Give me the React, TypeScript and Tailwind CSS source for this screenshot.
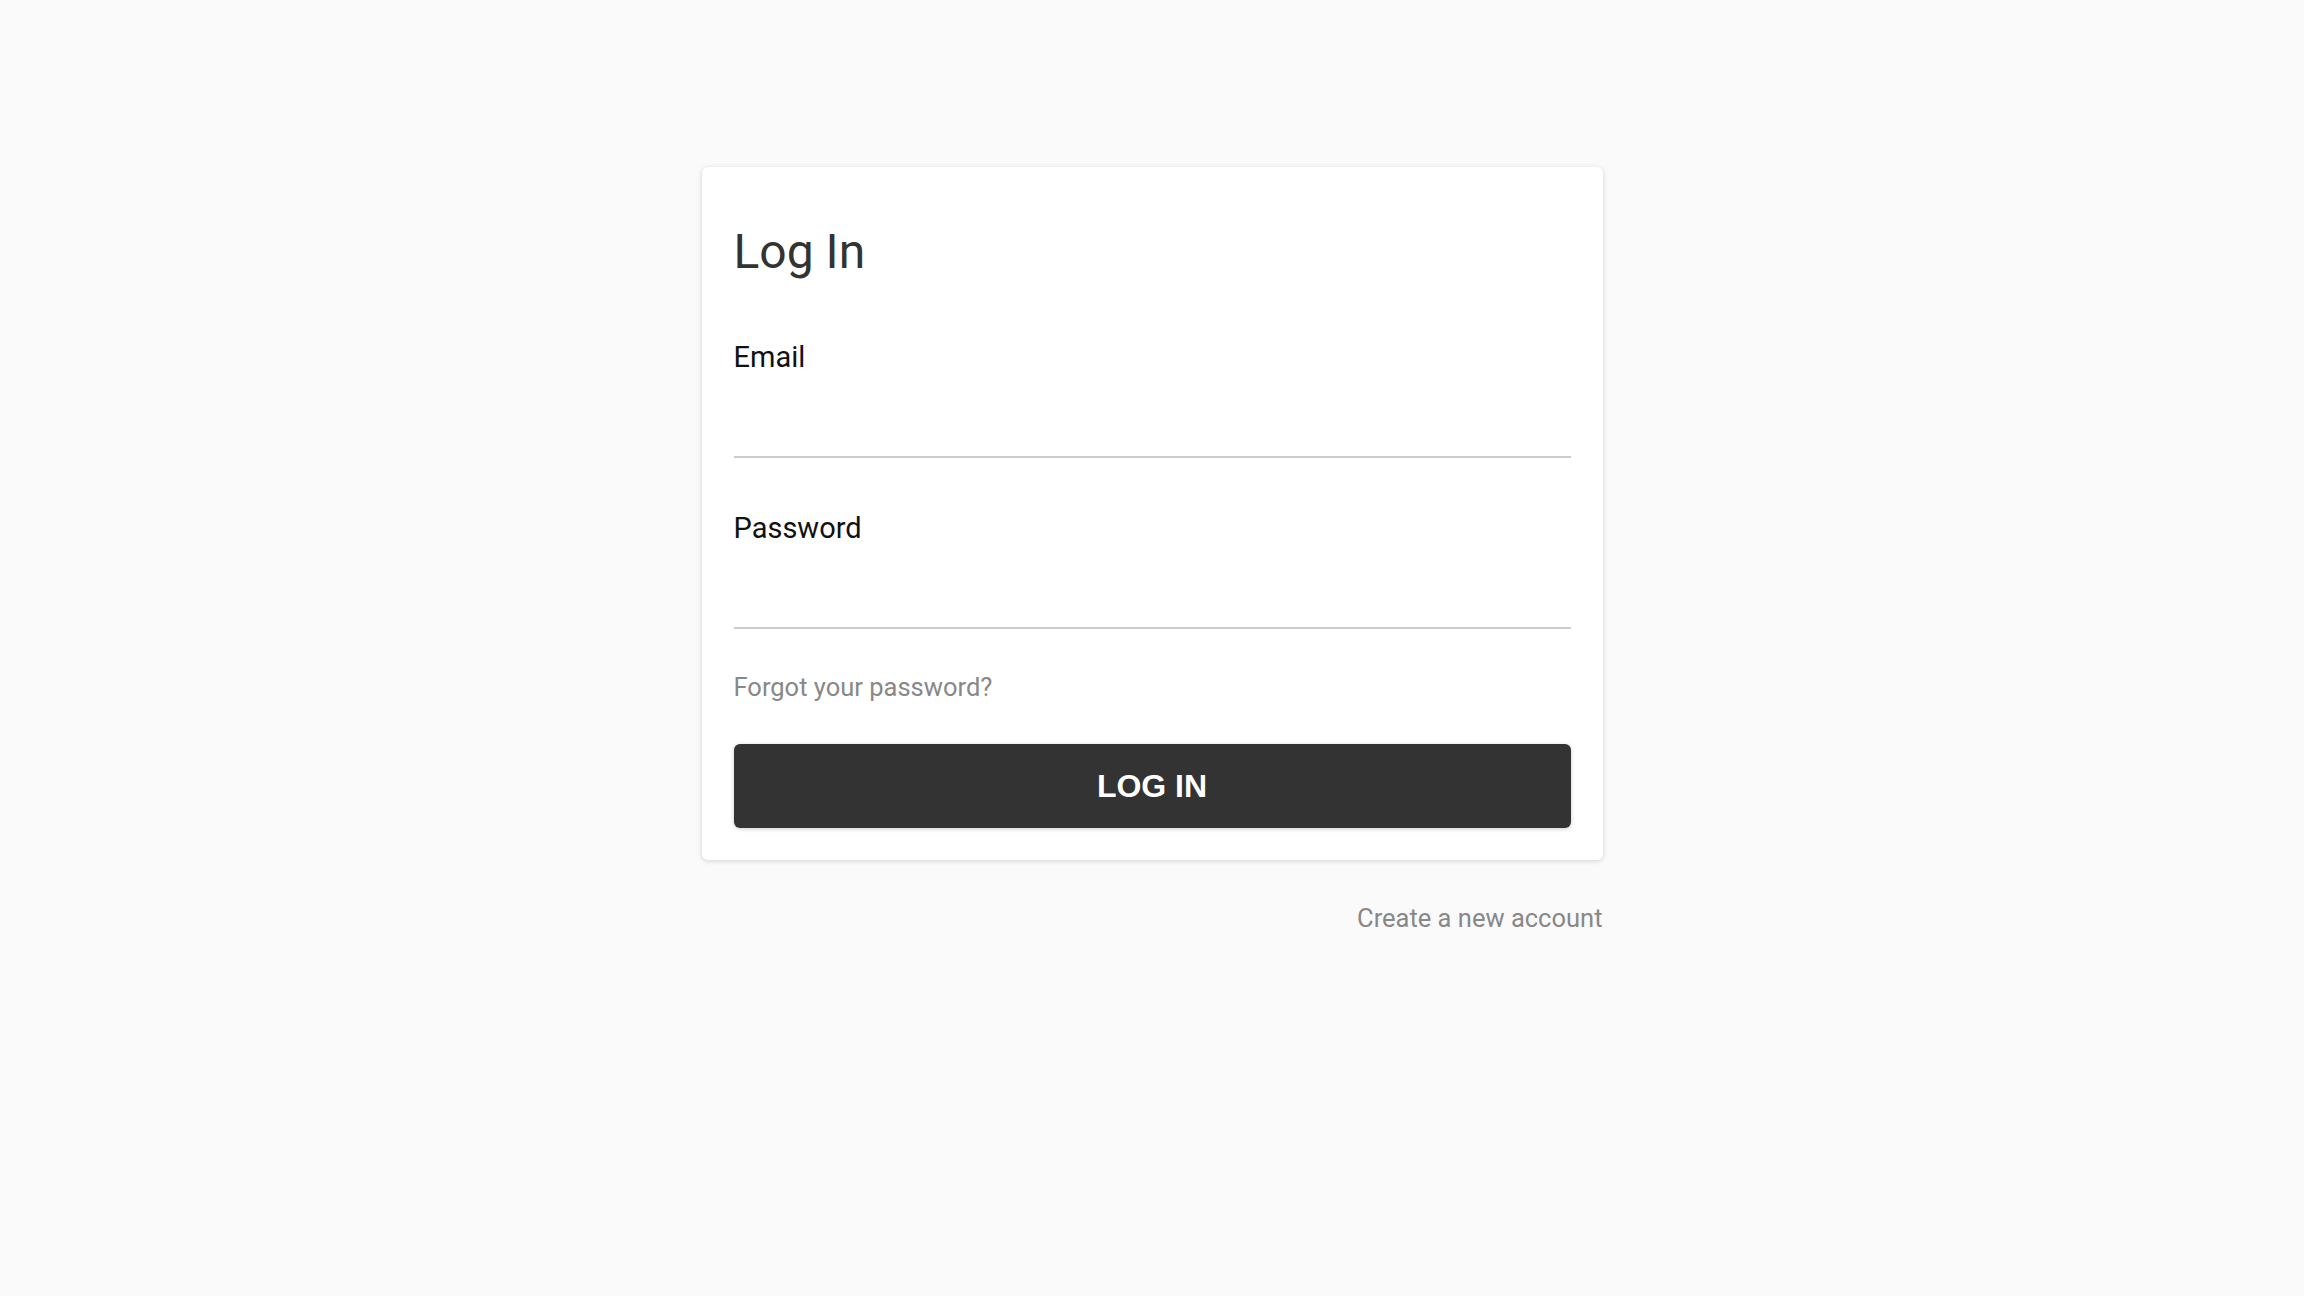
import React from 'react';

const App: React.FC = () => {
  return (
    <div
      className="min-h-screen w-full bg-[#fafafa] flex flex-col items-center pt-[167px]"
      style={{ fontFamily: 'Roboto, "Liberation Sans", sans-serif' }}
    >
      {/* Card */}
      <div className="w-[901px] bg-white rounded-[6px] shadow-[0_1px_5px_rgba(0,0,0,0.16)] px-[32px] pt-[57px] pb-[32px] flex flex-col">
        <h1 className="text-[48px] leading-[56px] font-normal text-[#333333]">Log In</h1>

        {/* Email */}
        <label className="mt-[59px] text-[29px] leading-[36px] text-[#111111]">Email</label>
        <input
          type="email"
          className="h-[83px] w-full border-b-2 border-[#cccccc] bg-transparent outline-none text-[28px]"
        />

        {/* Password */}
        <label className="mt-[52px] text-[29px] leading-[36px] text-[#111111]">Password</label>
        <input
          type="password"
          className="h-[83px] w-full border-b-2 border-[#cccccc] bg-transparent outline-none text-[28px]"
        />

        <a className="mt-[43px] text-[25.5px] leading-[30px] text-[#888888] cursor-pointer self-start">
          Forgot your password?
        </a>

        {/* Submit */}
        <button
          className="mt-[42px] h-[84px] w-full rounded-[6px] bg-[#333333] text-white text-[32px] font-bold shadow-[0_1px_4px_rgba(0,0,0,0.2)]"
          style={{ fontFamily: '"Liberation Sans", Arial, sans-serif' }}
        >
          LOG IN
        </button>
      </div>

      <div className="w-[901px] mt-[43px] flex justify-end">
        <a className="text-[25.5px] leading-[30px] text-[#888888] cursor-pointer">Create a new account</a>
      </div>
    </div>
  );
};

export default App;
